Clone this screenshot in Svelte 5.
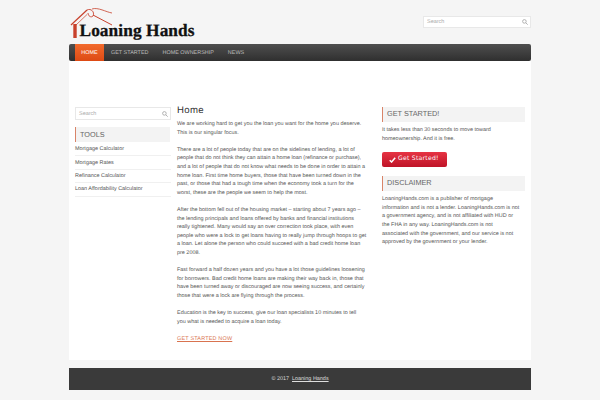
<script>
  const tools = ['Mortgage Calculator', 'Mortgage Rates', 'Refinance Calculator', 'Loan Affordability Calculator'];
  const nav = ['HOME', 'GET STARTED', 'HOME OWNERSHIP', 'NEWS'];
  const paras = [
    ['We are working hard to get you the loan you want for the home you deserve.', 'This is our singular focus.'],
    ['There are a lot of people today that are on the sidelines of lending, a lot of', 'people that do not think they can attain a home loan (refinance or purchase),', 'and a lot of people that do not know what needs to be done in order to attain a', 'home loan. First time home buyers, those that have been turned down in the', 'past, or those that had a tough time when the economy took a turn for the', 'worst, these are the people we seem to help the most.'],
    ['After the bottom fell out of the housing market – starting about 7 years ago –', 'the lending principals and loans offered by banks and financial institutions', 'really tightened. Many would say an over correction took place, with even', 'people who were a lock to get loans having to really jump through hoops to get', 'a loan. Let alone the person who could succeed with a bad credit home loan', 'pre 2008.'],
    ['Fast forward a half dozen years and you have a lot those guidelines loosening', 'for borrowers. Bad credit home loans are making their way back in, those that', 'have been turned away or discouraged are now seeing success, and certainly', 'those that were a lock are flying through the process.'],
    ['Education is the key to success, give our loan specialists 10 minutes to tell', 'you what is needed to acquire a loan today.']
  ];
</script>

<div class="page">
  <header class="top">
    <div class="logo">
      <svg class="roof" width="46" height="34" viewBox="0 0 46 34" fill="none" stroke="#c8412c">
        <path d="M1 18 L17 3" stroke-width="1.2" />
        <path d="M6 18 L17 7.5" stroke-width="0.7" />
        <path d="M17 3 C21 1 25 5 23 9 C21 11 18 9 18 6" stroke-width="0.9" />
        <path d="M23 8 L42 18" stroke-width="1" />
        <path d="M22 2 C28 0 36 5 42 6" stroke-width="0.8" />
        <path d="M5 17 V31" stroke-width="3.4" />
      </svg>
      <span class="brand">Loaning Hands</span>
    </div>
    <div class="search top-search">
      <span>Search</span>
      <svg width="6" height="6" viewBox="0 0 8 8" fill="none" stroke="#aaa" stroke-width="1.2"><circle cx="3.2" cy="3.2" r="2.4" /><path d="M5 5 L7.6 7.6" /></svg>
    </div>
  </header>

  <nav class="nav">
    {#each nav as item, i}
      <span class="nav-item" class:active={i === 0}>{item}</span>
    {/each}
  </nav>

  <main class="wrap">
    <aside class="left">
      <div class="search">
        <span>Search</span>
        <svg width="6" height="6" viewBox="0 0 8 8" fill="none" stroke="#aaa" stroke-width="1.2"><circle cx="3.2" cy="3.2" r="2.4" /><path d="M5 5 L7.6 7.6" /></svg>
      </div>
      <h3 class="widget">TOOLS</h3>
      <ul>
        {#each tools as t}<li>{t}</li>{/each}
      </ul>
    </aside>

    <article class="content">
      <h1>Home</h1>
      {#each paras as p}
        <p>{#each p as line}<span class="line">{line}</span>{/each}</p>
      {/each}
      <p><span class="cta">GET STARTED NOW</span></p>
    </article>

    <aside class="right">
      <h3 class="widget">GET STARTED!</h3>
      <p>It takes less than 30 seconds to move toward<br />homeownership. And it is free.</p>
      <div class="btn">
        <svg width="7" height="6" viewBox="0 0 7 6" fill="none" stroke="#fff" stroke-width="1.5"><path d="M0.7 3.2 L2.6 5 L6.2 0.8" /></svg>
        Get Started!
      </div>
      <h3 class="widget">DISCLAIMER</h3>
      <p class="disc">LoaningHands.com is a publisher of mortgage<br />information and is not a lender. LoaningHands.com is not<br />a government agency, and is not affiliated with HUD or<br />the FHA in any way. LoaningHands.com is not<br />associated with the government, and our service is not<br />approved by the government or your lender.</p>
    </aside>
  </main>

  <footer class="foot">© 2017 <u>Loaning Hands</u></footer>
</div>

<style>
  :global(body) {
    margin: 0;
    background: #f5f5f5;
    font-family: "Liberation Sans", Arial, sans-serif;
    text-rendering: geometricPrecision;
  }
  .page {
    width: 462px;
    height: 400px;
    margin-left: 69px;
    overflow: hidden;
    color: #555;
    font-size: 5.45px;
  }
  .top {
    height: 44px;
    display: flex;
    justify-content: space-between;
    align-items: flex-start;
  }
  .logo {
    position: relative;
    height: 44px;
    width: 140px;
  }
  .roof {
    position: absolute;
    left: 1px;
    top: 7px;
  }
  .brand {
    position: absolute;
    left: 10.5px;
    top: 21px;
    font-family: "Liberation Serif", serif;
    font-weight: bold;
    font-size: 17.3px;
    line-height: 20px;
    letter-spacing: 0.1px;
    color: #111;
    white-space: nowrap;
    -webkit-text-stroke: 0.3px #111;
  }
  .search {
    box-sizing: border-box;
    height: 12px;
    background: #fff;
    border: 1px solid #e8e8e8;
    display: flex;
    align-items: center;
    justify-content: space-between;
    padding: 0 2px 0 3px;
    color: #aaa;
  }
  .top-search {
    width: 108px;
    margin-top: 16px;
  }
  .nav {
    height: 17px;
    display: flex;
    border-radius: 2px;
    overflow: hidden;
    background: linear-gradient(#4f4f4f, #2f2f2f);
    padding-left: 6px;
  }
  .nav-item {
    display: flex;
    align-items: center;
    color: #bdbdbd;
    margin-right: 14px;
  }
  .nav-item.active {
    box-sizing: border-box;
    width: 29px;
    background: linear-gradient(#f26a2c, #dd4a14);
    color: #fff;
    justify-content: center;
    margin-right: 7px;
  }
  .wrap {
    background: #fff;
    height: 299px;
    box-sizing: border-box;
    padding-top: 41px;
    display: flex;
  }
  .left {
    width: 96px;
    margin-left: 6px;
  }
  .left .search {
    height: 13px;
    margin-top: 5px;
  }
  .widget {
    margin: 0;
    box-sizing: border-box;
    background: #f3f3f3;
    border-left: 1px solid #d98468;
    font-weight: normal;
    color: #666;
    display: flex;
    align-items: center;
    padding-left: 4px;
    height: 15px;
    font-size: 7.3px;
  }
  .left .widget {
    margin-top: 7px;
    margin-right: 1px;
    margin-bottom: 1px;
  }
  ul {
    list-style: none;
    margin: 0;
    padding: 0;
  }
  li {
    height: 13.4px;
    display: flex;
    align-items: center;
    border-bottom: 1px solid #f0f0f0;
    box-sizing: border-box;
    color: #555;
  }
  .content {
    width: 192px;
    margin-left: 6px;
    line-height: 8.6px;
  }
  h1 {
    margin: 3px 0 3px;
    font-size: 9.6px;
    line-height: 12px;
    font-weight: normal;
    color: #333;
    letter-spacing: 0.35px;
  }
  .content p {
    margin: 0 0 8.6px;
  }
  .line {
    display: block;
    white-space: nowrap;
  }
  .cta {
    color: #d9734f;
    text-decoration: underline;
    letter-spacing: 0.2px;
  }
  .right {
    width: 143px;
    margin-left: 13px;
    line-height: 8.6px;
    margin-top: 5px;
  }
  .right p {
    margin: 4px 0 0;
    white-space: nowrap;
  }
  .btn {
    width: 65px;
    height: 15px;
    margin: 9px 0 9px;
    border-radius: 2px;
    background: linear-gradient(#e63343, #bf1428);
    color: #fff;
    font-size: 6.1px;
    letter-spacing: 0.25px;
    font-family: "DejaVu Sans", sans-serif;
    display: flex;
    align-items: center;
    gap: 2px;
    padding-left: 7px;
    box-sizing: border-box;
    white-space: nowrap;
  }
  .foot {
    height: 22px;
    margin-top: 8px;
    background: #3a3a3a;
    color: #ddd;
    display: flex;
    align-items: center;
    justify-content: center;
    gap: 1.5px;
    white-space: pre;
  }
</style>
